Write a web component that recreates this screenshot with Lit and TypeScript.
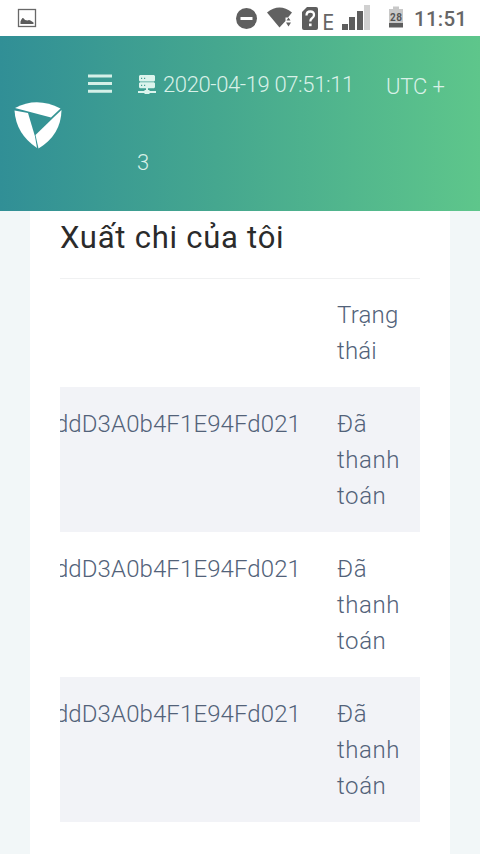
import { LitElement, html, css } from "lit";
import { customElement } from "lit/decorators.js";

@customElement("status-bar")
class StatusBar extends LitElement {
  static styles = css`
    :host { display: flex; height: 36px; background: #fff; }
    svg { display: block; width: 480px; height: 36px; }
    .net { font: 400 22px "Noto Sans", sans-serif; fill: #666; }
    .pct { font: 700 10px Roboto, sans-serif; fill: #555; }
    .time { font: 500 20.5px Roboto, sans-serif; fill: #666; }
  `;
  render() {
    return html`<svg viewBox="0 0 480 36">
      <rect x="18.500" y="9.500" width="17" height="17" fill="none" stroke="#686868" stroke-width="1.300" />
      <path d="M20.500 24V21.500Q21 19.500 22.500 18Q23.500 17.500 25 20L27.500 20.500Q29 19.500 30.500 20.500L33.500 22.500V24Z" fill="#5c5c5c" />
      <circle cx="246.500" cy="18.500" r="10.500" fill="#5f5f5f" />
      <rect x="240.500" y="17" width="12" height="3" fill="#fff" />
      <path d="M267 12.500Q279.500 2.500 292 12.500L288 17.500H285.500V21L279.500 27.500Z" fill="#616161" />
      <path d="M286.500 20.500l2-3 2 3zM286 22.500h5l-2.500 4z" fill="#616161" />
      <path d="M307 7H316Q318 7 318 9V28Q318 30 316 30H304Q302 30 302 28V12Z" fill="#5e5e5e" />
      <path d="M306.500 15.500Q306.500 11.500 310.300 11.500T314 15Q314 17 312 18.300Q310.300 19.500 310.300 21.500" fill="none" stroke="#fff" stroke-width="2.300" />
      <rect x="309" y="23.500" width="2.600" height="2.700" fill="#fff" />
      <text class="net" x="322" y="29.500">E</text>
      <path d="M342 24h6v6h-6zM349 17h6v13h-6zM357 11h6v19h-6z" fill="#5e5e5e" />
      <rect x="364" y="5" width="6" height="25" fill="#d0d0d0" />
      <path d="M389 9h4V6.500h6V9h4v14h-14z" fill="#c8c8c8" />
      <path d="M389 23h14v4.500h-14z" fill="#5e5e5e" />
      <text class="pct" x="390" y="20.500" textLength="12">28</text>
      <text class="time" x="414" y="26" textLength="53">11:51</text>
    </svg>`;
  }
}

@customElement("site-header")
class SiteHeader extends LitElement {
  static styles = css`
    :host {
      display: flex; box-sizing: border-box; height: 175px;
      background: linear-gradient(90deg, #318f96 0%, #45a78f 45%, #5ec68b 100%);
      font: 300 22px/78px Roboto, "Noto Sans", sans-serif; color: #d9f1e8;
    }
    .logo { width: 50px; height: 50px; margin: 64px 0 0 13px; }
    .menu { width: 24px; height: 20px; margin: 38px 0 0 25px; }
    .clock { width: 218px; margin: 10px 0 0 25px; }
    .now { display: flex; align-items: center; }
    .server { width: 18px; height: 19px; margin: -2px 7px 0 1px; }
    .date { letter-spacing: -0.38px; white-space: nowrap; }
    .zone { margin: 12px 0 0 31px; white-space: nowrap; letter-spacing: -0.1px; }
  `;
  render() {
    return html`
      <svg class="logo" viewBox="0 0 50 50">
        <path d="M2 8Q24 -3.500 47.500 8.500L38 17.500Z" fill="#fff" />
        <path d="M1.500 10.500L15 13L22 36.500L24 48Q3 34 1.500 10.500Z" fill="#fff" />
        <path d="M48.500 10Q48 35 25.500 48.500L22.500 35L40 18Z" fill="#fff" />
      </svg>
      <svg class="menu" viewBox="0 0 24 20">
        <path d="M0 .5h24v3H0zM0 8h24v3H0zM0 15.700h24v3H0z" fill="#d5f0e8" />
      </svg>
      <div class="clock">
        <div class="now">
          <svg class="server" viewBox="0 0 18 19">
            <path d="M2 0h14l1 1v4.500l-1 1H2l-1-1V1zM2 7.300h14l1 1v4l-1 1H2l-1-1v-4zM8 13h2v2h1l1 1h6v2h-6l-1 1H7l-1-1H0v-2h6l1-1h1z" fill="#dcf4ed" />
            <path d="M3 2.700h1.200V4H3zM6 2.700h1.200V4H6zM3 9.700h1.200V11H3zM6 9.700h1.200V11H6z" fill="#459e94" />
          </svg>
          <span class="date">2020-04-19 07:51:11</span>
        </div>
        <div>3</div>
      </div>
      <div class="zone">UTC +</div>
    `;
  }
}

@customElement("app-root")
class AppRoot extends LitElement {
  static styles = css`
    :host {
      display: flex; flex-direction: column; height: 854px; overflow: hidden;
      background: #f2f7f8; font-family: Roboto, "Noto Sans", sans-serif;
    }
    .card { flex: 1; box-sizing: border-box; margin: 0 30px; padding: 0 30px; background: #fff; }
    .title {
      box-sizing: border-box; height: 68px; margin: 0; padding-top: 7px;
      border-bottom: 1px solid #f0f1f2;
      font-weight: 400; font-size: 31px; line-height: 39px; color: #2b2b2b;
      letter-spacing: 0.75px; white-space: nowrap;
    }
    .row {
      display: grid; grid-template-columns: 241px 65px; column-gap: 36px;
      box-sizing: border-box; height: 145px; padding-top: 19px; overflow: hidden;
      font-weight: 300; font-size: 24px; line-height: 36px; color: #526279;
    }
    .head { height: 108px; padding-top: 18px; }
    .head .state { letter-spacing: 0.2px; }
    .shade { background: #f2f3f7; }
    .hash {
      display: flex; justify-content: flex-end; overflow: hidden; white-space: nowrap;
      letter-spacing: 0.1px;
    }
    .state { letter-spacing: 0.6px; }
  `;
  rows = [1, 2, 3].map(() => ({ hash: "ddD3A0b4F1E94Fd021", state: "Đã thanh toán" }));
  render() {
    return html`
      <status-bar></status-bar>
      <site-header></site-header>
      <main class="card">
        <h1 class="title">Xuất chi của tôi</h1>
        <div class="row head"><span></span><span class="state">Trạng thái</span></div>
        ${this.rows.map((r, i) => html`
          <div class="row ${i % 2 ? "" : "shade"}">
            <div class="hash"><span>${r.hash}</span></div>
            <div class="state">${r.state}</div>
          </div>`)}
      </main>
    `;
  }
}
